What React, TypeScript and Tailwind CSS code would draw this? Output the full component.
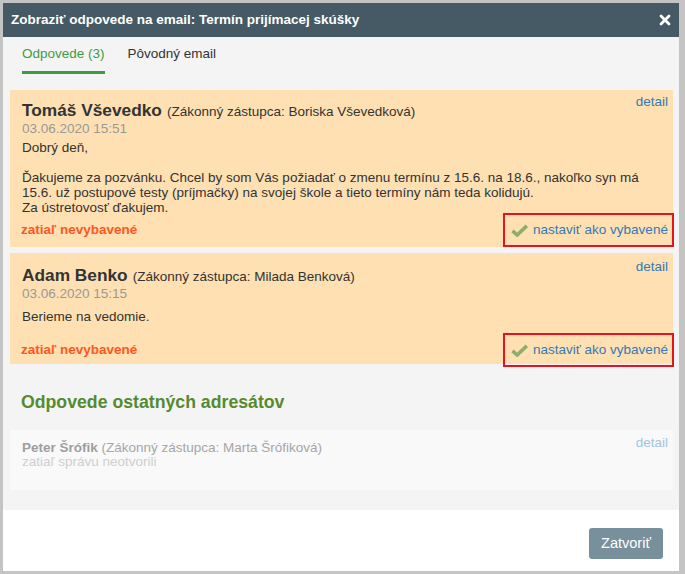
import React from "react";

const font = { fontFamily: '"Liberation Sans", Arial, sans-serif' };

function Check() {
  return (
    <svg width="17" height="13" viewBox="0 0 17 13" className="shrink-0">
      <path d="M1.5 6.8 L6.2 11 L15.8 1.8" fill="none" stroke="#8fae6e" strokeWidth="3.6" strokeLinejoin="miter" />
    </svg>
  );
}

function Close() {
  return (
    <svg width="12" height="12" viewBox="0 0 12 12">
      <path d="M2 2 L10 10 M10 2 L2 10" stroke="#fff" strokeWidth="2.8" strokeLinecap="round" />
    </svg>
  );
}

type CardProps = {
  name: string;
  guardian: string;
  date: string;
  body: React.ReactNode;
  pt: string;
  bodyMt: string;
  rowMt: string;
  rowMb: string;
};

function ReplyCard({ name, guardian, date, body, pt, bodyMt, rowMt, rowMb }: CardProps) {
  return (
    <div className={`bg-[#ffe0b2] pl-[12px] pr-[5px] ${pt}`}>
      <div className="flex items-start">
        <div className="flex-1 leading-[19px] text-[#333] whitespace-nowrap">
          <span className="text-[17.3px] font-bold">{name}</span>
          <span className="text-[13.5px] ml-[5px]">{guardian}</span>
        </div>
        <a className="text-[13.5px] leading-[16px] text-[#337ab7] -mt-[7px]">detail</a>
      </div>
      <div className="text-[13.5px] leading-[16px] text-[#999]">{date}</div>
      <div className={`text-[13.5px] leading-[15px] text-[#333] whitespace-nowrap ${bodyMt}`}>{body}</div>
      <div className={`flex items-center justify-between ${rowMt} ${rowMb}`}>
        <span className="text-[13.5px] font-bold text-[#ff5722] -ml-[1px]">zatiaľ nevybavené</span>
        <a className="flex items-center gap-[5px] h-[34px] w-[171px] border-2 border-[#e5141c] pl-[6px] pr-[6px] -mr-[6px] text-[13.5px] text-[#337ab7] whitespace-nowrap">
          <Check />
          <span>nastaviť ako vybavené</span>
        </a>
      </div>
    </div>
  );
}

export default function App() {
  return (
    <div className="w-[685px] h-[574px] bg-[#c4c4c4] pt-[3px] pl-[3px] overflow-hidden" style={font}>
      <div className="w-[676px] h-[568px] bg-white flex flex-col">
        <div className="h-[34px] bg-[#455a64] flex items-center justify-between pl-[8px] pr-[8px] shrink-0">
          <span className="text-[13.5px] font-bold text-white">Zobraziť odpovede na email: Termín prijímacej skúšky</span>
          <Close />
        </div>
        <div className="h-[473px] bg-[#f4f4f4] pl-[7px] pr-[6px] shrink-0">
          <div className="flex pl-[12px] gap-[23px] text-[13.5px] leading-[16px]">
            <div className="pt-[9px] pb-[9px] border-b-[3px] border-[#3f9b3f] text-[#3f9b3f]">Odpovede (3)</div>
            <div className="pt-[9px] pb-[9px] text-[#333]">Pôvodný email</div>
          </div>
          <div className="mt-[16px] flex flex-col gap-[6px]">
            <ReplyCard
              name="Tomáš Vševedko"
              guardian="(Zákonný zástupca: Boriska Vševedková)"
              date="03.06.2020 15:51"
              pt="pt-[10.5px]"
              bodyMt="mt-[3px]"
              rowMt="-mt-[1.5px]"
              rowMb="mb-0"
              body={
                <>
                  Dobrý deň,
                  <br />
                  <br />
                  Ďakujeme za pozvánku. Chcel by som Vás požiadať o zmenu termínu z 15.6. na 18.6., nakoľko syn má
                  <br />
                  15.6. už postupové testy (príjmačky) na svojej škole a tieto termíny nám teda kolidujú.
                  <br />
                  Za ústretovosť ďakujem.
                </>
              }
            />
            <ReplyCard
              name="Adam Benko"
              guardian="(Zákonný zástupca: Milada Benková)"
              date="03.06.2020 15:15"
              pt="pt-[12.5px]"
              bodyMt="mt-[7px]"
              rowMt="mt-[9.5px]"
              rowMb="-mb-[3px]"
              body={<>Berieme na vedomie.</>}
            />
          </div>
          <div className="mt-[28px] pl-[11px] text-[17.7px] leading-[20px] font-bold text-[#558b2f]">
            Odpovede ostatných adresátov
          </div>
          <div className="mt-[18px] bg-[#f9f9f9] pl-[12px] pr-[5px] pt-[11px] pb-[21px] flex items-start">
            <div className="flex-1 text-[13.5px] leading-[14px]">
              <div className="text-[#a6a6a6]">
                <span className="font-bold text-[#9e9e9e]">Peter Šrófik</span> (Zákonný zástupca: Marta Šrófiková)
              </div>
              <div className="text-[#cfcfcf]">zatiaľ správu neotvorili</div>
            </div>
            <a className="text-[13.5px] leading-[16px] text-[#a3c4e2] -mt-[6px]">detail</a>
          </div>
        </div>
        <div className="flex-1 flex justify-end items-start pt-[18px] pr-[16px]">
          <button className="h-[31px] w-[74px] rounded-[3px] bg-[#78909c] text-white text-[14.5px]">Zatvoriť</button>
        </div>
      </div>
    </div>
  );
}
